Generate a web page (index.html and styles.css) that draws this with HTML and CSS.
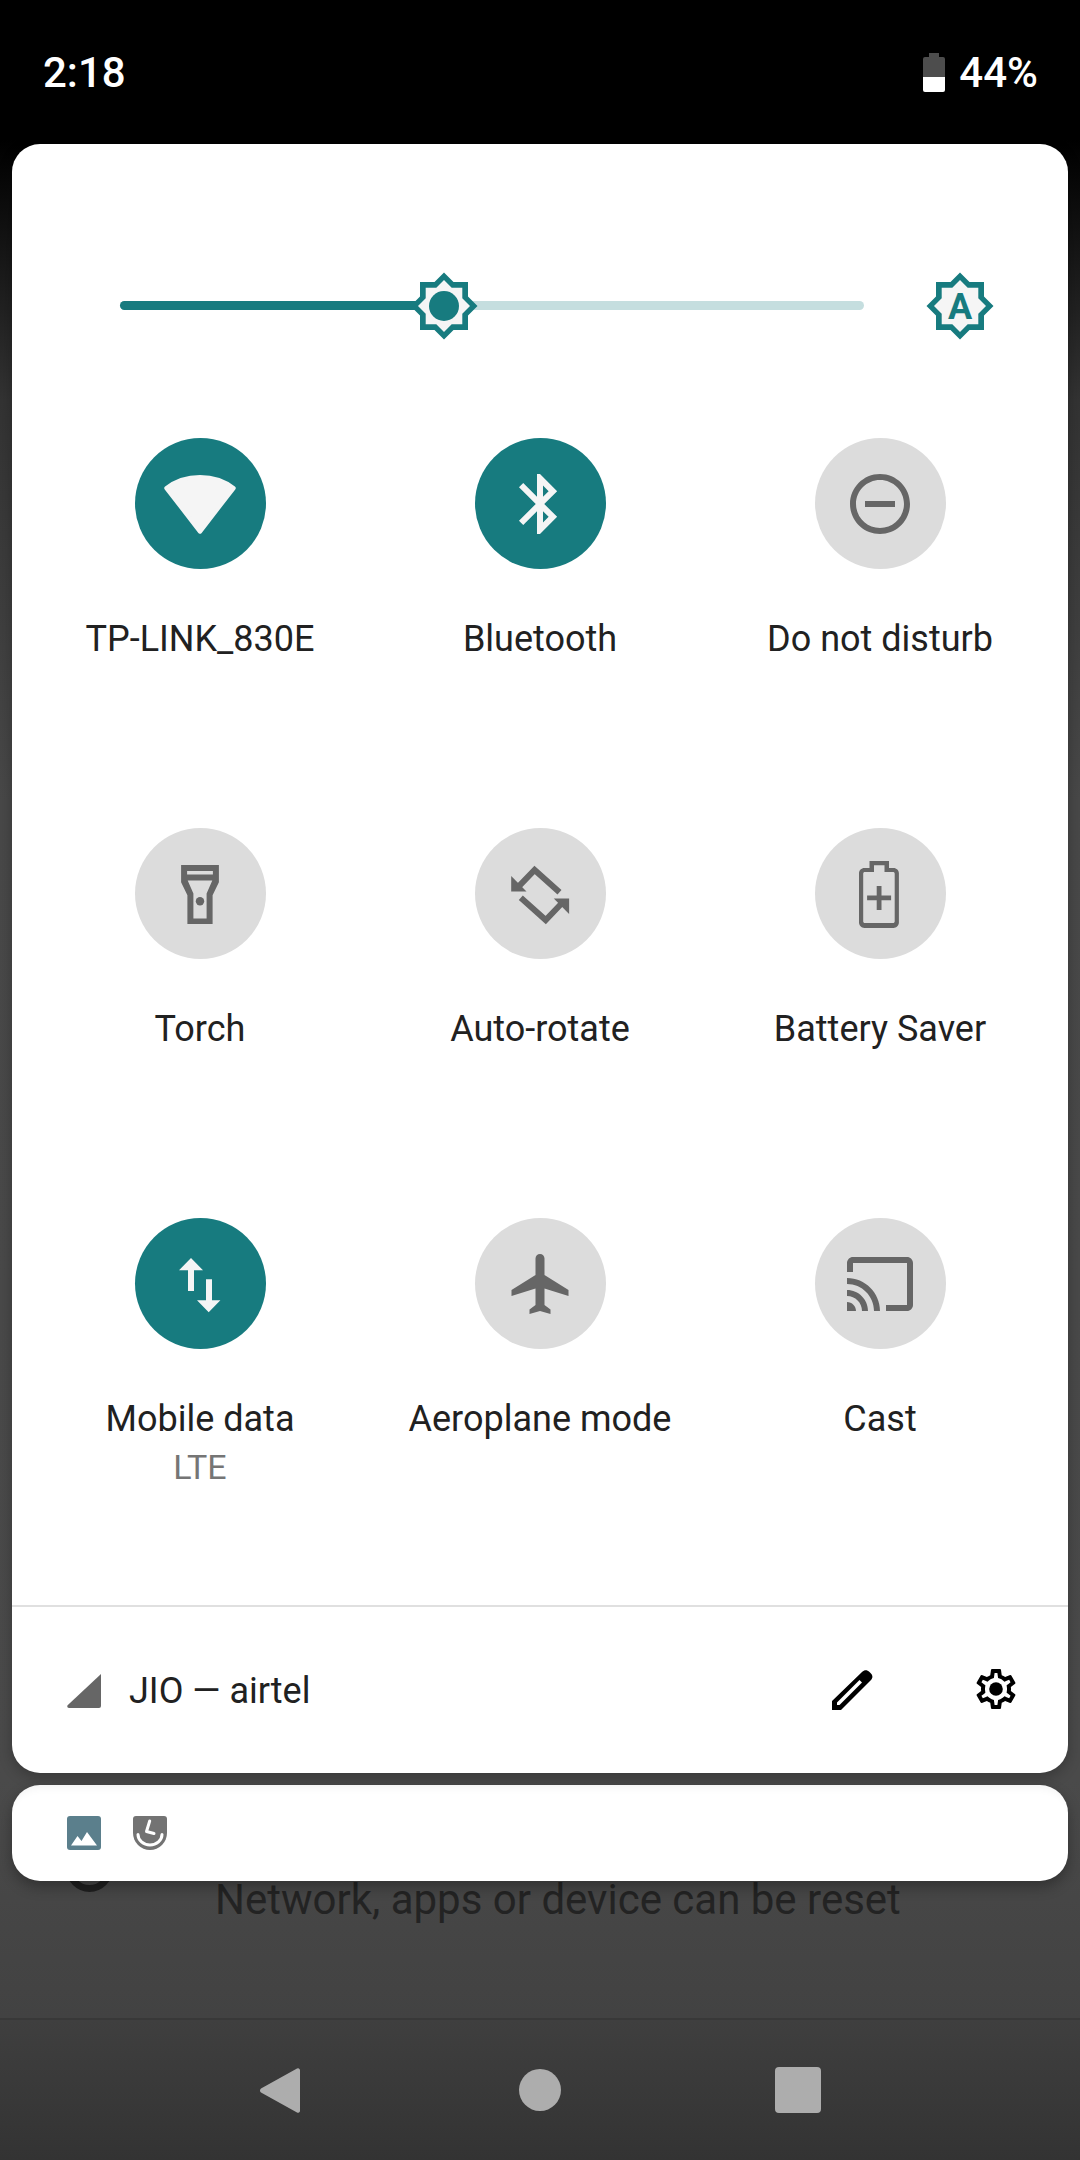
FILE: index.html
```html
<!DOCTYPE html>
<html lang="en">
<head>
    <meta charset="UTF-8">
    <meta name="viewport" content="width=device-width, initial-scale=1.0">
    <title>Quick Settings</title>
    <link rel="stylesheet" href="styles.css">
</head>
<body>
    <div class="screen">
        <!-- page behind the shade -->
        <div class="backdrop">
            <div class="backdrop__row">
                <span class="backdrop__ring"></span>
                <span class="backdrop__text">Network, apps or device can be reset</span>
            </div>
            <div class="navbar">
                <svg class="navbar__back" viewBox="0 0 42 49"><path d="M39 2.500 3 22.500a2.500 2.500 0 0 0 0 4L39 46.500a2 2 0 0 0 3-1.500V4a2 2 0 0 0-3-1.500z"/></svg>
                <span class="navbar__home"></span>
                <span class="navbar__recent"></span>
            </div>
        </div>

        <!-- pulled down shade -->
        <div class="shade">
            <div class="statusbar">
                <span class="statusbar__time">2:18</span>
                <div class="statusbar__right">
                    <svg class="statusbar__battery" width="22" height="39" viewBox="0 0 22 39">
                        <path fill="#4d4d4d" d="M6 0h10v4h4a2 2 0 0 1 2 2v18H0V6a2 2 0 0 1 2-2h4z"/>
                        <path fill="#fff" d="M0 24h22v13a2 2 0 0 1-2 2H2a2 2 0 0 1-2-2z"/>
                    </svg>
                    <span class="statusbar__level">44%</span>
                </div>
            </div>

            <div class="panel">
                <div class="brightness">
                    <div class="brightness__track">
                        <div class="brightness__fill" style="width: 43.5%"></div>
                        <svg class="brightness__thumb" width="68" height="68" viewBox="0 0 68 68">
                            <polygon class="star-outer" points="34,0.500 43.500,10 58,10 58,24.500 67.500,34 58,43.500 58,58 43.500,58 34,67.500 24.500,58 10,58 10,43.500 0.500,34 10,24.500 10,10 24.500,10"/>
                            <polygon class="star-inner" points="34,8 41.700,15.700 52.300,15.700 52.300,26.300 60,34 52.300,41.700 52.300,52.300 41.700,52.300 34,60 26.300,52.300 15.700,52.300 15.700,41.700 8,34 15.700,26.300 15.700,15.700 26.300,15.700"/>
                            <circle class="star-core" cx="34" cy="34" r="15"/>
                        </svg>
                    </div>
                    <svg class="brightness__auto" width="68" height="68" viewBox="0 0 68 68">
                        <polygon class="star-outer" points="34,0.500 43.500,10 58,10 58,24.500 67.500,34 58,43.500 58,58 43.500,58 34,67.500 24.500,58 10,58 10,43.500 0.500,34 10,24.500 10,10 24.500,10"/>
                        <polygon class="star-inner" points="34,8 41.700,15.700 52.300,15.700 52.300,26.300 60,34 52.300,41.700 52.300,52.300 41.700,52.300 34,60 26.300,52.300 15.700,52.300 15.700,41.700 8,34 15.700,26.300 15.700,15.700 26.300,15.700"/>
                        <text class="star-letter" x="34" y="47" text-anchor="middle">A</text>
                    </svg>
                </div>

                <div class="tiles">
                    <div class="tile is-on">
                        <div class="tile__circle">
                            <svg class="tile__icon" viewBox="0 0 24 24"><path stroke="#f5f5f5" stroke-width="1.400" stroke-linejoin="round" d="M.8 6.700C3.800 4.300 7.500 3 12 3s8.200 1.300 11.200 3.700L12 21.200z"/></svg>
                        </div>
                        <div class="tile__label">TP-LINK_830E</div>
                    </div>
                    <div class="tile is-on">
                        <div class="tile__circle">
                            <svg class="tile__icon" viewBox="0 0 24 24"><path d="M17.710 7.710 12 2h-1v7.590L6.410 5 5 6.410 10.590 12 5 17.590 6.410 19 11 14.410V22h1l5.710-5.710-4.300-4.290 4.300-4.290zM13 5.830l1.880 1.880L13 9.590V5.830zm1.880 10.460L13 18.170v-3.760l1.880 1.880z"/></svg>
                        </div>
                        <div class="tile__label">Bluetooth</div>
                    </div>
                    <div class="tile">
                        <div class="tile__circle">
                            <svg class="tile__icon" viewBox="0 0 24 24"><path d="M7 11v2h10v-2H7zm5-9C6.480 2 2 6.480 2 12s4.480 10 10 10 10-4.480 10-10S17.520 2 12 2zm0 18c-4.410 0-8-3.590-8-8s3.590-8 8-8 8 3.590 8 8-3.590 8-8 8z"/></svg>
                        </div>
                        <div class="tile__label">Do not disturb</div>
                    </div>

                    <div class="tile">
                        <div class="tile__circle">
                            <svg class="tile__icon" viewBox="0 0 24 24"><path fill-rule="evenodd" d="M5.700 2.300h12.600v5.800L16.200 12.400V22H7.800V12.400L5.700 8.100zM7.700 4.300v1.200h8.600V4.300zM7.900 7.500l1.900 4.300v8.400h4.400v-8.400l1.900-4.300z"/><circle cx="12" cy="14.400" r="1.400"/></svg>
                        </div>
                        <div class="tile__label">Torch</div>
                    </div>
                    <div class="tile">
                        <div class="tile__circle">
                            <svg class="tile__icon" viewBox="0 0 24 24">
                                <g id="rotate-half">
                                    <path fill="none" stroke="#666" stroke-width="2" d="M5 9.400 10.200 4l8.300 7.400"/>
                                    <path d="M2.400 6v5.200h5.100z"/>
                                </g>
                                <use href="#rotate-half" transform="rotate(180 12.050 12.330)"/>
                            </svg>
                        </div>
                        <div class="tile__label">Auto-rotate</div>
                    </div>
                    <div class="tile">
                        <div class="tile__circle">
                            <svg class="tile__icon" viewBox="0 0 24 24"><path fill-rule="evenodd" d="M8.500 1h6.500v2.300h1.500c1 0 1.800.8 1.800 1.800v16.400c0 1-.8 1.800-1.800 1.800H6.800c-1 0-1.800-.8-1.800-1.800V5.100c0-1 .8-1.800 1.800-1.800h1.700zM10 2.400v2.300H7c-.4 0-.6.200-.6.600v15.800c0 .4.200.6.600.6h9.300c.4 0 .6-.2.6-.6V5.300c0-.4-.2-.6-.6-.6h-2.800V2.400z"/><path d="M10.900 9.300h1.600v3.200h3.200v1.600h-3.200v3.200h-1.600v-3.200H7.700v-1.600h3.200z"/></svg>
                        </div>
                        <div class="tile__label">Battery Saver</div>
                    </div>

                    <div class="tile is-on">
                        <div class="tile__circle">
                            <svg class="tile__icon" viewBox="0 0 24 24"><path d="M9 3.300l4 4.100h-3v6.900H8V7.400H5zM14 10.400h2v7h2.800l-3.900 4-3.900-4H14z"/></svg>
                        </div>
                        <div class="tile__label">Mobile data</div>
                        <div class="tile__sublabel">LTE</div>
                    </div>
                    <div class="tile">
                        <div class="tile__circle">
                            <svg class="tile__icon" viewBox="0 0 24 24"><path transform="translate(.5 0)" d="M21 16v-2l-8-5V3.500c0-.830-.670-1.500-1.500-1.500S10 2.670 10 3.500V9l-8 5v2l8-2.500V19l-2 1.500V22l3.500-1 3.500 1v-1.500L13 19v-5.500l8 2.500z"/></svg>
                        </div>
                        <div class="tile__label">Aeroplane mode</div>
                    </div>
                    <div class="tile">
                        <div class="tile__circle">
                            <svg class="tile__icon" viewBox="0 0 24 24"><path d="M21 3H3c-1.100 0-2 .9-2 2v3h2V5h18v14h-7v2h7c1.100 0 2-.9 2-2V5c0-1.100-.9-2-2-2zM1 18v3h3c0-1.660-1.340-3-3-3zm0-4v2c2.760 0 5 2.240 5 5h2c0-3.870-3.130-7-7-7zm0-4v2c4.970 0 9 4.030 9 9h2c0-6.080-4.930-11-11-11z"/></svg>
                        </div>
                        <div class="tile__label">Cast</div>
                    </div>
                </div>

                <div class="panel__footer">
                    <svg class="panel__signal" width="34" height="34" viewBox="0 0 34 34"><path d="M34 0v32a2 2 0 0 1-2 2H2c-1.500 0-2.300-1.500-1.400-2.700z"/></svg>
                    <span class="panel__carrier">JIO — airtel</span>
                    <svg class="panel__edit" width="41" height="41" viewBox="0 0 41 41"><path fill-rule="evenodd" d="M0 41V32L30 3c2.500-2.500 5-2.500 7.500 0 3 2.500 4 5 1.500 8L9 41zM5 36h2.500L30 13.500 27.500 11 5 33.500z"/></svg>
                    <svg class="panel__gear" width="48" height="48" viewBox="0 0 24 24"><path d="M19.430 12.980c.04-.32.07-.64.07-.98 0-.34-.03-.66-.07-.98l2.110-1.650c.19-.15.24-.42.12-.64l-2-3.460c-.09-.16-.26-.25-.44-.25-.06 0-.12.01-.17.03l-2.490 1c-.52-.4-1.080-.73-1.690-.98l-.38-2.650C14.460 2.180 14.250 2 14 2h-4c-.25 0-.46.180-.49.420l-.38 2.650c-.61.25-1.170.59-1.690.98l-2.490-1c-.06-.02-.12-.03-.18-.03-.17 0-.34.09-.43.25l-2 3.460c-.13.22-.07.49.12.64l2.110 1.650c-.04.32-.07.65-.07.98 0 .33.03.66.07.98l-2.110 1.650c-.19.15-.24.42-.12.64l2 3.460c.09.16.26.25.44.25.06 0 .12-.01.17-.03l2.490-1c.52.4 1.080.73 1.690.98l.38 2.650c.03.24.24.42.49.42h4c.25 0 .46-.18.49-.42l.38-2.650c.61-.25 1.170-.59 1.690-.98l2.490 1c.06.02.12.03.18.03.17 0 .34-.09.43-.25l2-3.460c.12-.22.07-.49-.12-.64l-2.110-1.650zm-1.980-1.710c.04.31.05.52.05.73 0 .21-.02.43-.05.73l-.14 1.130.89.7 1.080.84-.7 1.210-1.270-.51-1.040-.42-.9.68c-.43.32-.84.56-1.250.73l-1.060.43-.16 1.130-.2 1.350h-1.400l-.19-1.350-.16-1.130-1.060-.43c-.43-.18-.83-.41-1.230-.71l-.91-.7-1.060.43-1.270.51-.7-1.210 1.080-.84.89-.7-.14-1.130c-.03-.31-.05-.54-.05-.74s.02-.43.05-.73l.14-1.130-.89-.7-1.080-.84.7-1.210 1.270.51 1.040.42.9-.68c.43-.32.84-.56 1.250-.73l1.060-.43.16-1.130.2-1.350h1.390l.19 1.350.16 1.130 1.060.43c.43.18.83.41 1.230.71l.91.7 1.060-.43 1.270-.51.7 1.210-1.070.85-.89.7.14 1.130z"/><circle cx="12" cy="12" r="3.400"/></svg>
                </div>
            </div>

            <div class="notifications">
                <svg width="34" height="34" viewBox="0 0 34 34"><rect width="34" height="34" rx="3" fill="#5b7f8c"/><path fill="#fff" d="M4 29.500 10.500 20l4 5 5.500-9 10 13.500z"/></svg>
                <svg width="34" height="34" viewBox="0 0 34 34"><path fill="#737373" d="M3 0h28a3 3 0 0 1 3 3v14a17 17 0 0 1-34 0V3a3 3 0 0 1 3-3z"/><path fill="none" stroke="#fff" stroke-width="3" stroke-linecap="round" d="M5 18.500A12 10.500 0 0 0 29 18.500"/><path fill="none" stroke="#fff" stroke-width="3" stroke-linecap="round" stroke-linejoin="round" d="M16.700 5 13.500 15.500l7.500 2"/></svg>
            </div>
        </div>
    </div>
</body>
</html>
```

FILE: styles.css
```css
* { box-sizing: border-box; }
html, body { margin: 0; height: 100%; }
body { font-family: Roboto, "Noto Sans", sans-serif; }

.screen { position: relative; width: 1080px; height: 2160px; overflow: hidden; background: linear-gradient(#000 140px, #333 400px, #484848 800px, #4a4a4a 1780px, #424242 2018px, #333 2160px); }

/* page behind */
.backdrop { height: 100%; display: flex; flex-direction: column; justify-content: flex-end; }
.backdrop__row { display: flex; align-items: flex-start; height: 139px; padding-left: 66px; }
.backdrop__ring { width: 47px; height: 47px; margin-top: -34px; border: 7px solid #1f1f1f; border-radius: 50%; }
.backdrop__text { margin-left: 102px; margin-top: -3px; font-size: 42px; line-height: 48px; color: #232323; }

.navbar { display: flex; align-items: center; height: 142px; padding-left: 258px; border-top: 2px solid #383838; background: linear-gradient(#3f3f3f, #333); }
.navbar__back { width: 42px; height: 49px; fill: #adadad; }
.navbar__home { width: 42px; height: 42px; margin-left: 219px; border-radius: 50%; background: #adadad; }
.navbar__recent { width: 46px; height: 46px; margin-left: 214px; border-radius: 4px; background: #adadad; }

/* shade */
.shade { position: absolute; top: 0; left: 0; width: 100%; padding: 0 12px; }

.statusbar { display: flex; align-items: center; justify-content: space-between; height: 144px; padding: 0 30px 0 31px; color: #fff; font-weight: 500; font-size: 42px; }
.statusbar__right { display: flex; align-items: center; gap: 14px; }

.panel { height: 1629px; padding-top: 128px; background: #fff; border-radius: 28px; box-shadow: 0 4px 14px rgba(0,0,0,.25); }

.brightness { display: flex; align-items: center; height: 68px; padding-left: 108px; }
.brightness__track { position: relative; width: 744px; height: 9px; margin-top: -1px; border-radius: 5px; background: #c5dedf; }
.brightness__fill { height: 100%; border-radius: 5px; background: #177b7f; }
.brightness__thumb { position: absolute; top: -29px; left: 290px; }
.brightness__auto { margin-left: 62px; }

.star-outer, .star-core { fill: #177b7f; }
.star-inner { fill: #f5f5f5; }
.star-letter { fill: #177b7f; font-family: Roboto, sans-serif; font-weight: 700; font-size: 36px; }

.tiles { display: grid; grid-template-columns: repeat(3, 340px); grid-template-rows: 390px 390px 387px; margin-top: 98px; padding: 0 18px; }
.tile { display: flex; flex-direction: column; align-items: center; }
.tile__circle { display: flex; align-items: center; justify-content: center; width: 131px; height: 131px; border-radius: 50%; background: #dcdcdc; }
.tile__icon { width: 72px; height: 72px; fill: #666; }
.tile.is-on .tile__circle { background: #177b7f; }
.tile.is-on .tile__icon { fill: #f5f5f5; }
.tile__label { margin-top: 46px; font-size: 36px; line-height: 48px; color: #212121; white-space: nowrap; }
.tile__sublabel { font-size: 34px; line-height: 49px; color: #757575; }

.panel__footer { display: flex; align-items: center; height: 168px; padding: 0 48px 0 55px; border-top: 2px solid #e0e0e0; }
.panel__signal { fill: #666; margin-top: 1px; }
.panel__carrier { margin-left: 28px; margin-top: 2px; font-size: 36px; color: #212121; }
.panel__edit { margin-left: auto; margin-top: -2px; }
.panel__gear { margin-left: 99px; margin-top: -2px; }

.notifications { display: flex; align-items: center; gap: 32px; height: 96px; margin-top: 12px; padding-left: 55px; background: #fff; border-radius: 28px; box-shadow: 0 6px 14px rgba(0,0,0,.3), inset 0 10px 10px -8px rgba(0,0,0,.06); }
```
